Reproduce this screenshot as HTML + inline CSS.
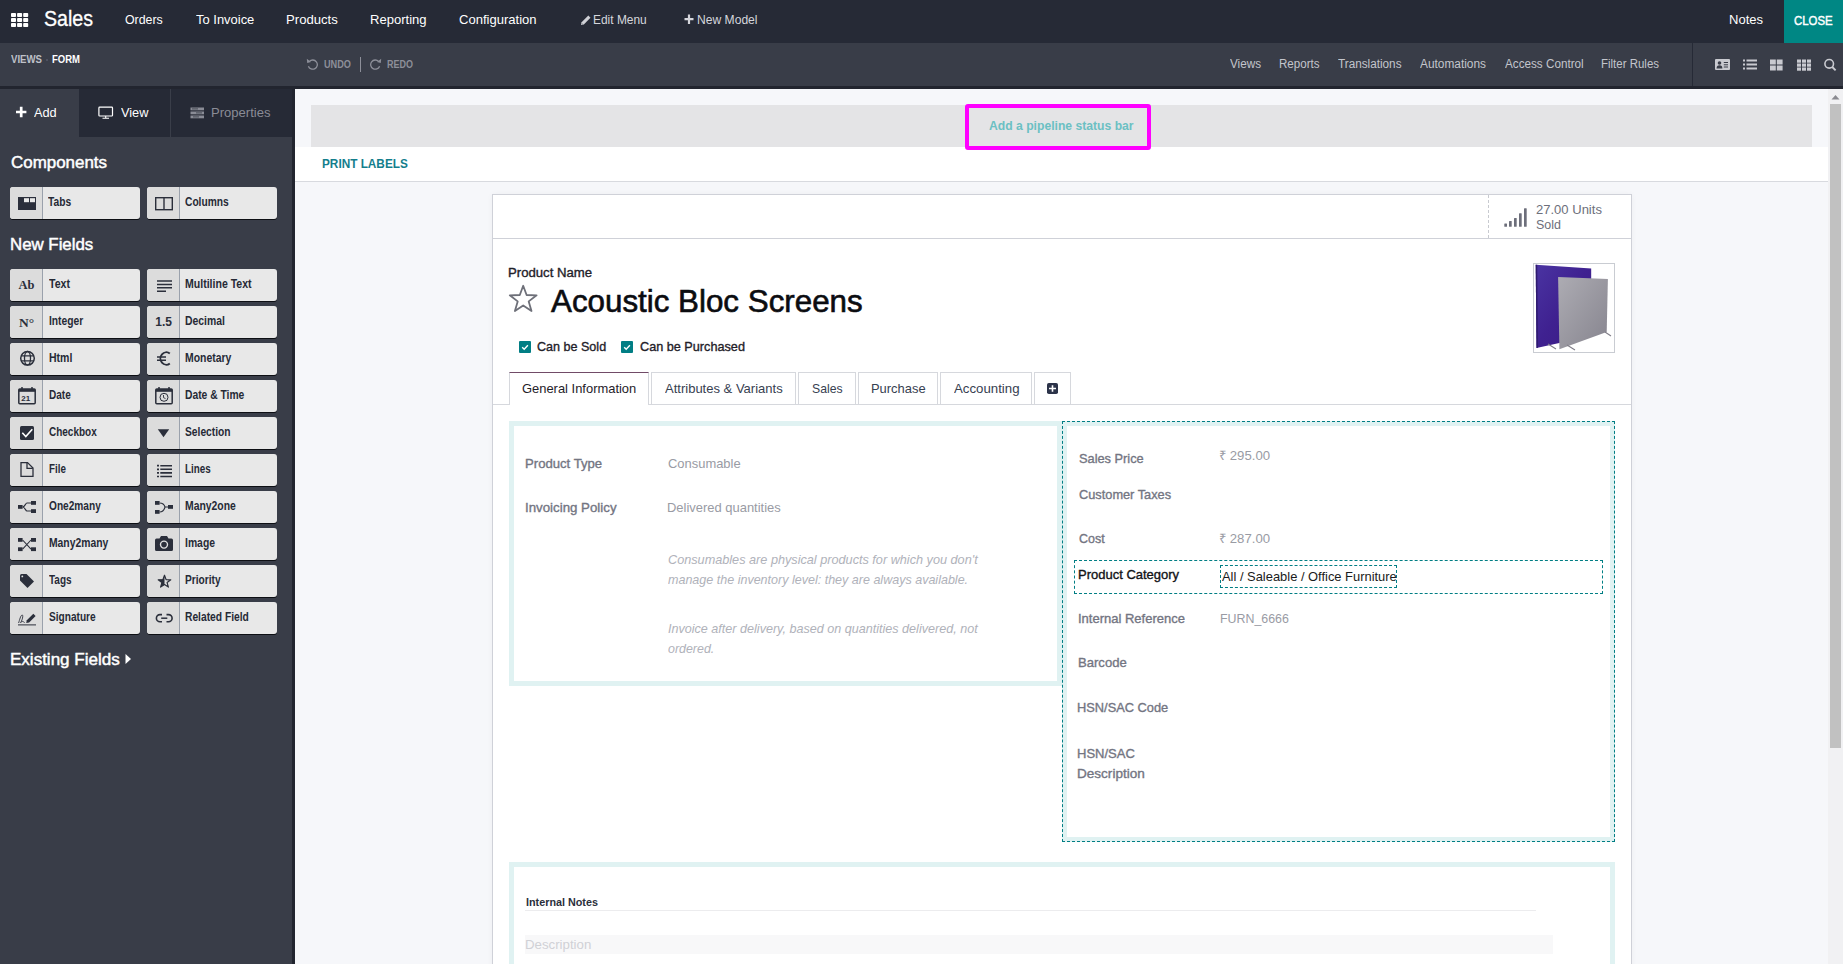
<!DOCTYPE html>
<html><head><meta charset="utf-8"><title>Studio</title><style>*{box-sizing:border-box;margin:0;padding:0}
html,body{width:1843px;height:964px;overflow:hidden;background:#f6f7fa;font-family:"Liberation Sans",sans-serif}
body{position:relative}
.a{position:absolute;white-space:nowrap}
.btn{position:absolute;width:130px;height:32px;background:#e8e8e8;border-radius:3px;box-shadow:0 1px 0 #0d0f14}
.btn .ic{position:absolute;left:0;top:0;width:33px;height:32px;background:#dcdcdc;border-right:1px solid #9aa1ac;border-radius:3px 0 0 3px}
</style></head><body>
<div class="a" style="left:0px;top:0px;width:1843px;height:43px;background:#262a36"></div>
<div class="a" style="left:0px;top:43px;width:1843px;height:43px;background:#393d48"></div>
<div class="a" style="left:0px;top:86px;width:1843px;height:3px;background:#22252f"></div>
<div class="a" style="left:1784px;top:0px;width:59px;height:43px;background:#008784"></div>
<div class="a" style="left:1692px;top:43px;width:1px;height:43px;background:#262a36"></div>
<div class="a" style="left:0px;top:89px;width:292px;height:875px;background:#393d48"></div>
<div class="a" style="left:292px;top:89px;width:3px;height:875px;background:#22252f"></div>
<div class="a" style="left:79px;top:89px;width:213px;height:48px;background:#262a36"></div>
<div class="a" style="left:170px;top:89px;width:1px;height:48px;background:#3a3e49"></div>
<div class="a" style="left:295px;top:89px;width:1533px;height:875px;background:#f6f7fa"></div>
<div class="a" style="left:311px;top:105px;width:1501px;height:42px;background:#e4e4e6"></div>
<div class="a" style="left:295px;top:147px;width:1533px;height:34px;background:#fff"></div>
<div class="a" style="left:295px;top:181px;width:1533px;height:1px;background:#d8dadf"></div>
<div class="a" style="left:1828px;top:89px;width:15px;height:875px;background:#f1f1f3"></div>
<div class="a" style="left:1830px;top:104px;width:11px;height:644px;background:#c1c1c1"></div>
<svg class="a" style="left:1831px;top:94px" width="9" height="6"><path d="M0.5 5.5 L4.5 1 L8.5 5.5Z" fill="#8a8a90"/></svg>
<div class="a" style="left:965px;top:104px;width:186px;height:46px;border:4px solid #ff00ff;border-radius:3px;box-sizing:border-box"></div>
<div class="a" style="left:492px;top:194px;width:1140px;height:800px;background:#fff;border:1px solid #cfd1d8;box-sizing:border-box;box-shadow:0 0 6px rgba(0,0,0,0.04)"></div>
<div class="a" style="left:493px;top:238px;width:1138px;height:1px;background:#cfd1d8"></div>
<div class="a" style="left:1488px;top:195px;width:1px;height:43px;border-left:1px dashed #c8cad0;box-sizing:border-box"></div>
<div class="a" style="left:1533px;top:263px;width:82px;height:90px;border:1px solid #c9ccd2;background:#fff;box-sizing:border-box"></div>
<svg class="a" style="left:1534px;top:264px" width="80" height="88" viewBox="0 0 80 88">
<defs><linearGradient id="gp" x1="0" y1="0" x2="1" y2="1"><stop offset="0" stop-color="#4a34a2"/><stop offset="0.5" stop-color="#3f2190"/><stop offset="1" stop-color="#3a1a84"/></linearGradient>
<linearGradient id="gg" x1="0" y1="0" x2="1" y2="1"><stop offset="0" stop-color="#adacb3"/><stop offset="1" stop-color="#86848e"/></linearGradient></defs>
<path d="M1.7 0.7 L57.2 4.4 L57.2 72 L2.5 84 Z" fill="url(#gp)"/>
<path d="M1.7 0.7 L3.2 0.8 L4 83.7 L2.5 84 Z" fill="#2e1a6e"/>
<path d="M24.1 13.1 L73.9 15.1 L72.7 67.9 L25.4 85.3 Z" fill="url(#gg)"/>
<path d="M14 80 L22 85 M33 81 L41 86 M71 68 L77 72" stroke="#807e88" stroke-width="1.1"/>
</svg>
<div class="a" style="left:493px;top:404px;width:16px;height:1px;background:#d6d8dd"></div>
<div class="a" style="left:509px;top:372px;width:140px;height:33px;border:1px solid #d6d8dd;border-top:1px solid #714b67;border-bottom:none;background:#fff;box-sizing:border-box"></div>
<div class="a" style="left:651px;top:372px;width:145px;height:33px;border:1px solid #d6d8dd;background:#fff;box-sizing:border-box"></div>
<div class="a" style="left:798px;top:372px;width:58px;height:33px;border:1px solid #d6d8dd;background:#fff;box-sizing:border-box"></div>
<div class="a" style="left:858px;top:372px;width:80px;height:33px;border:1px solid #d6d8dd;background:#fff;box-sizing:border-box"></div>
<div class="a" style="left:940px;top:372px;width:92px;height:33px;border:1px solid #d6d8dd;background:#fff;box-sizing:border-box"></div>
<div class="a" style="left:1034px;top:372px;width:37px;height:33px;border:1px solid #d6d8dd;background:#fff;box-sizing:border-box"></div>
<div class="a" style="left:649px;top:404px;width:982px;height:1px;background:#d6d8dd"></div>
<svg class="a" style="left:1047px;top:383px" width="11" height="11" viewBox="0 0 11 11"><rect x="0" y="0" width="11" height="11" rx="1.8" fill="#2c3349"/><path d="M5.5 2.2V8.8M2 5.5H9" stroke="#fff" stroke-width="1.6"/></svg>
<div class="a" style="left:509px;top:421px;width:553px;height:265px;border:5px solid #e0f2f2;box-sizing:border-box"></div>
<div class="a" style="left:1062px;top:421px;width:553px;height:421px;border:5px solid #e0f2f2;box-sizing:border-box"></div>
<div class="a" style="left:1062px;top:421px;width:553px;height:421px;border:1px dashed #017e84;box-sizing:border-box"></div>
<div class="a" style="left:1074px;top:560px;width:529px;height:34px;border:1px dashed #017e84;box-sizing:border-box"></div>
<div class="a" style="left:1220px;top:565px;width:177px;height:23px;border:1px dashed #017e84;box-sizing:border-box"></div>
<div class="a" style="left:509px;top:862px;width:1106px;height:150px;border:5px solid #e0f2f2;box-sizing:border-box"></div>
<div class="a" style="left:525px;top:910px;width:1011px;height:1px;background:#ececee"></div>
<div class="a" style="left:525px;top:935px;width:1028px;height:19px;background:#f8f8f9"></div>
<div class="btn" style="left:10px;top:187px"><div class="ic"></div><svg class="a" style="left:0;top:0" width="32" height="32" viewBox="0 0 32 32"><rect x="8" y="10" width="18" height="13" fill="#2b2f3b"/><rect x="14" y="11.2" width="5" height="4" fill="#e8e8e8"/><rect x="20" y="11.2" width="5" height="4" fill="#e8e8e8"/></svg></div>
<div class="btn" style="left:147px;top:187px"><div class="ic"></div><svg class="a" style="left:0;top:0" width="32" height="32" viewBox="0 0 32 32"><rect x="8.7" y="10.7" width="16.6" height="12" fill="none" stroke="#2b2f3b" stroke-width="1.4"/><path d="M17 10.7V22.7" stroke="#2b2f3b" stroke-width="1.4"/></svg></div>
<div class="btn" style="left:10px;top:269px"><div class="ic"></div><svg class="a" style="left:0;top:0" width="32" height="32" viewBox="0 0 32 32"><text x="8.5" y="20" font-family="Liberation Serif" font-weight="bold" font-size="12.5" fill="#2b2f3b">Ab</text></svg></div>
<div class="btn" style="left:147px;top:269px"><div class="ic"></div><svg class="a" style="left:0;top:0" width="32" height="32" viewBox="0 0 32 32"><path d="M10 12H25M10 15.4H25M10 18.8H25M10 22.2H19" stroke="#2b2f3b" stroke-width="1.5"/></svg></div>
<div class="btn" style="left:10px;top:306px"><div class="ic"></div><svg class="a" style="left:0;top:0" width="32" height="32" viewBox="0 0 32 32"><text x="9" y="21" font-family="Liberation Serif" font-weight="bold" font-size="13.5" fill="#2b2f3b">N°</text></svg></div>
<div class="btn" style="left:147px;top:306px"><div class="ic"></div><svg class="a" style="left:0;top:0" width="32" height="32" viewBox="0 0 32 32"><text x="8.3" y="20" font-family="Liberation Sans" font-weight="bold" font-size="12" fill="#2b2f3b">1.5</text></svg></div>
<div class="btn" style="left:10px;top:343px"><div class="ic"></div><svg class="a" style="left:0;top:0" width="32" height="32" viewBox="0 0 32 32"><circle cx="17.5" cy="15.3" r="6.8" fill="none" stroke="#2b2f3b" stroke-width="1.5"/><ellipse cx="17.5" cy="15.3" rx="3" ry="6.8" fill="none" stroke="#2b2f3b" stroke-width="1.3"/><path d="M11 12.8H24M11 17.8H24" stroke="#2b2f3b" stroke-width="1.3"/></svg></div>
<div class="btn" style="left:147px;top:343px"><div class="ic"></div><svg class="a" style="left:0;top:0" width="32" height="32" viewBox="0 0 32 32"><path d="M22.8 10.6 A5.8 6.2 0 1 0 22.8 20.4" fill="none" stroke="#2b2f3b" stroke-width="1.9"/><path d="M10 14H19M10 17.2H19" stroke="#2b2f3b" stroke-width="1.4"/></svg></div>
<div class="btn" style="left:10px;top:380px"><div class="ic"></div><svg class="a" style="left:0;top:0" width="32" height="32" viewBox="0 0 32 32"><rect x="8.8" y="9" width="16.4" height="14.8" rx="1" fill="none" stroke="#2b2f3b" stroke-width="1.5"/><rect x="8.8" y="9" width="16.4" height="2.8" fill="#2b2f3b"/><path d="M12 7V10M22 7V10" stroke="#2b2f3b" stroke-width="1.5"/><text x="11.2" y="21.4" font-family="Liberation Sans" font-weight="bold" font-size="8" fill="#2b2f3b">21</text></svg></div>
<div class="btn" style="left:147px;top:380px"><div class="ic"></div><svg class="a" style="left:0;top:0" width="32" height="32" viewBox="0 0 32 32"><rect x="8.8" y="9" width="16.4" height="14.8" rx="1" fill="none" stroke="#2b2f3b" stroke-width="1.5"/><rect x="8.8" y="9" width="16.4" height="2.8" fill="#2b2f3b"/><path d="M12 7V10M22 7V10" stroke="#2b2f3b" stroke-width="1.5"/><circle cx="17" cy="17.3" r="4" fill="none" stroke="#2b2f3b" stroke-width="1"/><path d="M16.5 15V17.6L18.5 18.6" fill="none" stroke="#2b2f3b" stroke-width="0.9"/></svg></div>
<div class="btn" style="left:10px;top:417px"><div class="ic"></div><svg class="a" style="left:0;top:0" width="32" height="32" viewBox="0 0 32 32"><rect x="10" y="9" width="14" height="14" rx="1.5" fill="#2b2f3b"/><path d="M12.3 15.8L15.8 19.5L22.3 12.2" fill="none" stroke="#fff" stroke-width="1.6"/></svg></div>
<div class="btn" style="left:147px;top:417px"><div class="ic"></div><svg class="a" style="left:0;top:0" width="32" height="32" viewBox="0 0 32 32"><path d="M10.8 12.2H22.2L16.5 20.3Z" fill="#2b2f3b"/></svg></div>
<div class="btn" style="left:10px;top:454px"><div class="ic"></div><svg class="a" style="left:0;top:0" width="32" height="32" viewBox="0 0 32 32"><path d="M11 8.6H17.5L23 14V22.3H11Z" fill="none" stroke="#2b2f3b" stroke-width="1.3"/><path d="M17 8.8V14.3H22.8" fill="none" stroke="#2b2f3b" stroke-width="1.3"/></svg></div>
<div class="btn" style="left:147px;top:454px"><div class="ic"></div><svg class="a" style="left:0;top:0" width="32" height="32" viewBox="0 0 32 32"><path d="M10 11.7H12M10 15.3H12M10 18.9H12M10 22.5H12" stroke="#2b2f3b" stroke-width="1.7"/><path d="M13.3 11.7H25M13.3 15.3H25M13.3 18.9H25M13.3 22.5H25" stroke="#2b2f3b" stroke-width="1.6"/></svg></div>
<div class="btn" style="left:10px;top:491px"><div class="ic"></div><svg class="a" style="left:0;top:0" width="32" height="32" viewBox="0 0 32 32"><rect x="8" y="14" width="4.6" height="3.8" fill="#2b2f3b"/><rect x="21" y="10" width="5" height="3.8" fill="#2b2f3b"/><rect x="21" y="18.2" width="5" height="3.8" fill="#2b2f3b"/><path d="M12.6 16C15 16 15.5 12 17 12H21M12.6 16C15 16 15.5 20 17 20H21" fill="none" stroke="#2b2f3b" stroke-width="1.1"/></svg></div>
<div class="btn" style="left:147px;top:491px"><div class="ic"></div><svg class="a" style="left:0;top:0" width="32" height="32" viewBox="0 0 32 32"><rect x="8" y="10" width="4.6" height="3.8" fill="#2b2f3b"/><rect x="8" y="19" width="4.6" height="3.8" fill="#2b2f3b"/><rect x="21" y="14" width="5" height="3.8" fill="#2b2f3b"/><path d="M12.6 12C15 12 17 12.5 18 16H21M12.6 21C15 21 17 20 18 16" fill="none" stroke="#2b2f3b" stroke-width="1.1"/></svg></div>
<div class="btn" style="left:10px;top:528px"><div class="ic"></div><svg class="a" style="left:0;top:0" width="32" height="32" viewBox="0 0 32 32"><rect x="8" y="10" width="4.6" height="3.8" fill="#2b2f3b"/><rect x="8" y="19.3" width="4.6" height="3.8" fill="#2b2f3b"/><rect x="21" y="10" width="5" height="3.8" fill="#2b2f3b"/><rect x="21" y="19.3" width="5" height="3.8" fill="#2b2f3b"/><path d="M12.6 12L21 21.2M12.6 21.2L21 12" fill="none" stroke="#2b2f3b" stroke-width="1.1"/></svg></div>
<div class="btn" style="left:147px;top:528px"><div class="ic"></div><svg class="a" style="left:0;top:0" width="32" height="32" viewBox="0 0 32 32"><path d="M8 12.2Q8 10.6 9.5 10.6H12.5L14 8H20L21.5 10.6H24.5Q26 10.6 26 12.2V21.5Q26 23 24.5 23H9.5Q8 23 8 21.5Z" fill="#2b2f3b"/><circle cx="17" cy="16.6" r="3.5" fill="none" stroke="#e0e0e0" stroke-width="1.4"/></svg></div>
<div class="btn" style="left:10px;top:565px"><div class="ic"></div><svg class="a" style="left:0;top:0" width="32" height="32" viewBox="0 0 32 32"><path d="M10 10.5Q10 9 11.5 9H16.5L24 16.5L17.5 23L10 15.5Z" fill="#2b2f3b"/><circle cx="12.3" cy="11.4" r="0.9" fill="#e0e0e0"/></svg></div>
<div class="btn" style="left:147px;top:565px"><div class="ic"></div><svg class="a" style="left:0;top:0" width="32" height="32" viewBox="0 0 32 32"><path d="M17.5 10.2L19.1 14.6L23.8 14.8L20.1 17.6L21.4 22.1L17.5 19.5L13.6 22.1L14.9 17.6L11.2 14.8L15.9 14.6Z" fill="none" stroke="#2b2f3b" stroke-width="1.2" stroke-linejoin="round"/><path d="M17.5 10.2L15.9 14.6L11.2 14.8L14.9 17.6L13.6 22.1L17.5 19.5Z" fill="#2b2f3b"/></svg></div>
<div class="btn" style="left:10px;top:602px"><div class="ic"></div><svg class="a" style="left:0;top:0" width="32" height="32" viewBox="0 0 32 32"><path d="M8.6 21C9.6 18 10.6 13.2 12.2 13C13.6 13 12.2 18.5 10.6 20.6C12.2 18.6 13.8 19.6 14.6 20.8" fill="none" stroke="#2b2f3b" stroke-width="0.9"/><path d="M16.2 21L16.8 18.2L23.3 11.7L25.6 14L19.1 20.5Z" fill="#2b2f3b"/><path d="M8 22.9H26" stroke="#2b2f3b" stroke-width="1"/></svg></div>
<div class="btn" style="left:147px;top:602px"><div class="ic"></div><svg class="a" style="left:0;top:0" width="32" height="32" viewBox="0 0 32 32"><path d="M15 12.6H13A3.6 3.6 0 0 0 13 19.8H15M19.5 12.6H21.5A3.6 3.6 0 0 1 21.5 19.8H19.5" fill="none" stroke="#2b2f3b" stroke-width="1.6"/><path d="M14.2 16.2H20.3" stroke="#2b2f3b" stroke-width="1.5"/></svg></div>
<svg class="a" style="left:0;top:0" width="40" height="40"><rect x="11.0" y="13" width="5" height="4" rx="0.8" fill="#fff"/><rect x="17.1" y="13" width="5" height="4" rx="0.8" fill="#fff"/><rect x="23.2" y="13" width="5" height="4" rx="0.8" fill="#fff"/><rect x="11.0" y="18" width="5" height="4" rx="0.8" fill="#fff"/><rect x="17.1" y="18" width="5" height="4" rx="0.8" fill="#fff"/><rect x="23.2" y="18" width="5" height="4" rx="0.8" fill="#fff"/><rect x="11.0" y="23" width="5" height="4" rx="0.8" fill="#fff"/><rect x="17.1" y="23" width="5" height="4" rx="0.8" fill="#fff"/><rect x="23.2" y="23" width="5" height="4" rx="0.8" fill="#fff"/></svg>
<svg class="a" style="left:580px;top:14px" width="12" height="12" viewBox="0 0 12 12"><path d="M1 11L1.6 8.2L8.3 1.5L10.5 3.7L3.8 10.4Z" fill="#cfd0d6"/><path d="M2 9.5L2.6 10" stroke="#262a36" stroke-width="0.6"/></svg>
<svg class="a" style="left:684px;top:14px" width="11" height="11" viewBox="0 0 11 11"><path d="M5 0.5V10M0.5 5.2H9.5" stroke="#d5d6dc" stroke-width="2.2"/></svg>
<svg class="a" style="left:306px;top:58px" width="13" height="12" viewBox="0 0 13 12"><path d="M3.4 3.4A4.6 4.6 0 1 1 2.4 8.2" fill="none" stroke="#8d8f99" stroke-width="1.3"/><path d="M0.8 0.8L1.2 4.9L5 4.1Z" fill="#8d8f99"/></svg>
<svg class="a" style="left:360px;top:57px" width="1" height="15"><rect width="1" height="15" fill="#8d8f99"/></svg>
<svg class="a" style="left:369px;top:58px" width="13" height="12" viewBox="0 0 13 12"><path d="M9.6 3.4A4.6 4.6 0 1 0 10.6 8.2" fill="none" stroke="#8d8f99" stroke-width="1.3"/><path d="M12.2 0.8L11.8 4.9L8 4.1Z" fill="#8d8f99"/></svg>
<svg class="a" style="left:1714px;top:58px" width="124" height="14" viewBox="0 0 124 14">
<rect x="1" y="1" width="15" height="11" rx="1" fill="#c9cad0"/><circle cx="5.5" cy="5" r="1.8" fill="#393d48"/><path d="M2.6 10.5Q2.6 7.3 5.5 7.3Q8.4 7.3 8.4 10.5Z" fill="#393d48"/><path d="M9.8 4.5H14M9.8 6.8H14M9.8 9H14" stroke="#393d48" stroke-width="1"/>
<path d="M29 2.5H31M29 6.5H31M29 10.5H31" stroke="#c9cad0" stroke-width="1.8"/><path d="M32.5 2.5H43M32.5 6.5H43M32.5 10.5H43" stroke="#c9cad0" stroke-width="1.8"/>
<rect x="56" y="1.5" width="5.8" height="5" fill="#c9cad0"/><rect x="62.8" y="1.5" width="5.8" height="5" fill="#c9cad0"/><rect x="56" y="7.5" width="5.8" height="5" fill="#c9cad0"/><rect x="62.8" y="7.5" width="5.8" height="5" fill="#c9cad0"/>
<g fill="#c9cad0"><rect x="83" y="1.5" width="4" height="3.2"/><rect x="88" y="1.5" width="4" height="3.2"/><rect x="93" y="1.5" width="4" height="3.2"/><rect x="83" y="5.5" width="4" height="3.2"/><rect x="88" y="5.5" width="4" height="3.2"/><rect x="93" y="5.5" width="4" height="3.2"/><rect x="83" y="9.5" width="4" height="3.2"/><rect x="88" y="9.5" width="4" height="3.2"/><rect x="93" y="9.5" width="4" height="3.2"/></g>
<circle cx="115.2" cy="5.8" r="4.3" fill="none" stroke="#c9cad0" stroke-width="1.6"/><path d="M118.3 9L121.6 12.4" stroke="#c9cad0" stroke-width="1.9"/>
</svg>
<svg class="a" style="left:15px;top:106px" width="13" height="12" viewBox="0 0 13 12"><path d="M6.2 0.8V11.2M1 6H11.4" stroke="#fff" stroke-width="2.7"/></svg>
<svg class="a" style="left:98px;top:106px" width="16" height="13" viewBox="0 0 16 13"><rect x="0.9" y="1.2" width="13.6" height="8.8" rx="0.8" fill="none" stroke="#fff" stroke-width="1.2"/><path d="M4.5 12.2H11M7.7 10V12" stroke="#fff" stroke-width="1.1"/></svg>
<svg class="a" style="left:190px;top:107px" width="15" height="12" viewBox="0 0 15 12"><g fill="#8a8c96"><rect x="0.5" y="0.5" width="13.5" height="2.8"/><rect x="0.5" y="4.5" width="13.5" height="2.8"/><rect x="0.5" y="8.5" width="13.5" height="2.8"/></g><path d="M2 1.9H8M6 5.9H12M3 9.9H9" stroke="#393d48" stroke-width="0.8"/></svg>
<svg class="a" style="left:125px;top:653px" width="7" height="12" viewBox="0 0 7 12"><path d="M0.5 1L6 6L0.5 11Z" fill="#fff"/></svg>
<svg class="a" style="left:508px;top:284px" width="31" height="30" viewBox="0 0 31 30"><path d="M15.2 1.8L18.6 11L28.6 11.3L20.7 17.4L23.5 27L15.2 21.4L6.9 27L9.7 17.4L1.8 11.3L11.8 11Z" fill="none" stroke="#6e7079" stroke-width="1.8" stroke-linejoin="round"/></svg>
<svg class="a" style="left:519px;top:341px" width="12" height="12" viewBox="0 0 12 12"><rect width="12" height="12" rx="1" fill="#017e84"/><path d="M3.2 6.2L5.2 8.2L8.9 4.2" fill="none" stroke="#fff" stroke-width="1.4"/></svg>
<svg class="a" style="left:621px;top:341px" width="12" height="12" viewBox="0 0 12 12"><rect width="12" height="12" rx="1" fill="#017e84"/><path d="M3.2 6.2L5.2 8.2L8.9 4.2" fill="none" stroke="#fff" stroke-width="1.4"/></svg>
<svg class="a" style="left:1504px;top:207px" width="24" height="21" viewBox="0 0 24 21"><g fill="#6d6f7b"><rect x="0.3" y="16.5" width="2.7" height="3.3" rx="0.5"/><rect x="5" y="14" width="2.7" height="5.8" rx="0.5"/><rect x="10" y="11" width="2.7" height="8.8" rx="0.5"/><rect x="15" y="6.2" width="2.7" height="13.6" rx="0.5"/><rect x="20" y="1.3" width="2.7" height="18.5" rx="0.5"/></g></svg>
<div class="a" style="left:46px;top:59px;width:2px;height:2px;background:#4d5160"></div>
<div class="a t" style="left:44.30px;top:8.80px;font-size:21.5px;line-height:21.5px;font-weight:normal;font-style:normal;color:#ffffff;transform:scaleX(0.9127);transform-origin:0 0;font-family:'Liberation Sans',sans-serif;-webkit-text-stroke:0.3px #fff;">Sales</div>
<div class="a t" style="left:125.30px;top:13.00px;font-size:13px;line-height:13px;font-weight:normal;font-style:normal;color:#ffffff;transform:scaleX(0.9495);transform-origin:0 0;font-family:'Liberation Sans',sans-serif;">Orders</div>
<div class="a t" style="left:196.30px;top:13.00px;font-size:13px;line-height:13px;font-weight:normal;font-style:normal;color:#ffffff;transform:scaleX(0.9965);transform-origin:0 0;font-family:'Liberation Sans',sans-serif;">To Invoice</div>
<div class="a t" style="left:285.99px;top:13.00px;font-size:13px;line-height:13px;font-weight:normal;font-style:normal;color:#ffffff;transform:scaleX(1.0098);transform-origin:0 0;font-family:'Liberation Sans',sans-serif;">Products</div>
<div class="a t" style="left:370.00px;top:13.00px;font-size:13px;line-height:13px;font-weight:normal;font-style:normal;color:#ffffff;transform:scaleX(1.0030);transform-origin:0 0;font-family:'Liberation Sans',sans-serif;">Reporting</div>
<div class="a t" style="left:459.20px;top:13.00px;font-size:13px;line-height:13px;font-weight:normal;font-style:normal;color:#ffffff;transform:scaleX(1.0039);transform-origin:0 0;font-family:'Liberation Sans',sans-serif;">Configuration</div>
<div class="a t" style="left:592.98px;top:13.00px;font-size:13px;line-height:13px;font-weight:normal;font-style:normal;color:#d5d6dc;transform:scaleX(0.9179);transform-origin:0 0;font-family:'Liberation Sans',sans-serif;">Edit Menu</div>
<div class="a t" style="left:696.57px;top:13.00px;font-size:13px;line-height:13px;font-weight:normal;font-style:normal;color:#d5d6dc;transform:scaleX(0.9308);transform-origin:0 0;font-family:'Liberation Sans',sans-serif;">New Model</div>
<div class="a t" style="left:1728.50px;top:13.00px;font-size:13px;line-height:13px;font-weight:normal;font-style:normal;color:#ffffff;transform:scaleX(1.0012);transform-origin:0 0;font-family:'Liberation Sans',sans-serif;">Notes</div>
<div class="a t" style="left:1794.00px;top:14.00px;font-size:13px;line-height:13px;font-weight:normal;font-style:normal;color:#ffffff;transform:scaleX(0.8784);transform-origin:0 0;font-family:'Liberation Sans',sans-serif;-webkit-text-stroke:0.45px #fff;">CLOSE</div>
<div class="a t" style="left:11.00px;top:54.11px;font-size:10.5px;line-height:10.5px;font-weight:bold;font-style:normal;color:#bfc1c8;transform:scaleX(0.9162);transform-origin:0 0;font-family:'Liberation Sans',sans-serif;">VIEWS</div>
<div class="a t" style="left:51.80px;top:54.11px;font-size:10.5px;line-height:10.5px;font-weight:bold;font-style:normal;color:#ffffff;transform:scaleX(0.9049);transform-origin:0 0;font-family:'Liberation Sans',sans-serif;">FORM</div>
<div class="a t" style="left:323.90px;top:59.11px;font-size:10.5px;line-height:10.5px;font-weight:bold;font-style:normal;color:#8d8f99;transform:scaleX(0.8716);transform-origin:0 0;font-family:'Liberation Sans',sans-serif;">UNDO</div>
<div class="a t" style="left:387.00px;top:59.11px;font-size:10.5px;line-height:10.5px;font-weight:bold;font-style:normal;color:#8d8f99;transform:scaleX(0.8552);transform-origin:0 0;font-family:'Liberation Sans',sans-serif;">REDO</div>
<div class="a t" style="left:1229.50px;top:58.34px;font-size:12px;line-height:12px;font-weight:normal;font-style:normal;color:#c3c5cc;transform:scaleX(0.9751);transform-origin:0 0;font-family:'Liberation Sans',sans-serif;">Views</div>
<div class="a t" style="left:1279.00px;top:58.34px;font-size:12px;line-height:12px;font-weight:normal;font-style:normal;color:#c3c5cc;transform:scaleX(0.9639);transform-origin:0 0;font-family:'Liberation Sans',sans-serif;">Reports</div>
<div class="a t" style="left:1338.00px;top:58.34px;font-size:12px;line-height:12px;font-weight:normal;font-style:normal;color:#c3c5cc;transform:scaleX(0.9782);transform-origin:0 0;font-family:'Liberation Sans',sans-serif;">Translations</div>
<div class="a t" style="left:1420.00px;top:58.34px;font-size:12px;line-height:12px;font-weight:normal;font-style:normal;color:#c3c5cc;transform:scaleX(0.9895);transform-origin:0 0;font-family:'Liberation Sans',sans-serif;">Automations</div>
<div class="a t" style="left:1505.00px;top:58.34px;font-size:12px;line-height:12px;font-weight:normal;font-style:normal;color:#c3c5cc;transform:scaleX(0.9746);transform-origin:0 0;font-family:'Liberation Sans',sans-serif;">Access Control</div>
<div class="a t" style="left:1601.00px;top:58.34px;font-size:12px;line-height:12px;font-weight:normal;font-style:normal;color:#c3c5cc;transform:scaleX(0.9558);transform-origin:0 0;font-family:'Liberation Sans',sans-serif;">Filter Rules</div>
<div class="a t" style="left:33.70px;top:106.00px;font-size:13px;line-height:13px;font-weight:normal;font-style:normal;color:#ffffff;transform:scaleX(0.9825);transform-origin:0 0;font-family:'Liberation Sans',sans-serif;">Add</div>
<div class="a t" style="left:120.50px;top:106.00px;font-size:13px;line-height:13px;font-weight:normal;font-style:normal;color:#ffffff;transform:scaleX(0.9806);transform-origin:0 0;font-family:'Liberation Sans',sans-serif;">View</div>
<div class="a t" style="left:210.60px;top:106.00px;font-size:13px;line-height:13px;font-weight:normal;font-style:normal;color:#8a8c96;transform:scaleX(1.0043);transform-origin:0 0;font-family:'Liberation Sans',sans-serif;">Properties</div>
<div class="a t" style="left:10.60px;top:155.46px;font-size:16px;line-height:16px;font-weight:normal;font-style:normal;color:#ffffff;transform:scaleX(1.0582);transform-origin:0 0;font-family:'Liberation Sans',sans-serif;-webkit-text-stroke:0.45px #fff;">Components</div>
<div class="a t" style="left:9.55px;top:237.46px;font-size:16px;line-height:16px;font-weight:normal;font-style:normal;color:#ffffff;transform:scaleX(1.0521);transform-origin:0 0;font-family:'Liberation Sans',sans-serif;-webkit-text-stroke:0.45px #fff;">New Fields</div>
<div class="a t" style="left:9.54px;top:652.46px;font-size:16px;line-height:16px;font-weight:normal;font-style:normal;color:#ffffff;transform:scaleX(1.0632);transform-origin:0 0;font-family:'Liberation Sans',sans-serif;-webkit-text-stroke:0.45px #fff;">Existing Fields</div>
<div class="a t" style="left:48.30px;top:196.34px;font-size:12px;line-height:12px;font-weight:bold;font-style:normal;color:#262a36;transform:scaleX(0.8527);transform-origin:0 0;font-family:'Liberation Sans',sans-serif;">Tabs</div>
<div class="a t" style="left:184.80px;top:196.34px;font-size:12px;line-height:12px;font-weight:bold;font-style:normal;color:#262a36;transform:scaleX(0.8517);transform-origin:0 0;font-family:'Liberation Sans',sans-serif;">Columns</div>
<div class="a t" style="left:48.50px;top:278.34px;font-size:12px;line-height:12px;font-weight:bold;font-style:normal;color:#262a36;transform:scaleX(0.8828);transform-origin:0 0;font-family:'Liberation Sans',sans-serif;">Text</div>
<div class="a t" style="left:185.40px;top:278.34px;font-size:12px;line-height:12px;font-weight:bold;font-style:normal;color:#262a36;transform:scaleX(0.8788);transform-origin:0 0;font-family:'Liberation Sans',sans-serif;">Multiline Text</div>
<div class="a t" style="left:48.50px;top:315.34px;font-size:12px;line-height:12px;font-weight:bold;font-style:normal;color:#262a36;transform:scaleX(0.8553);transform-origin:0 0;font-family:'Liberation Sans',sans-serif;">Integer</div>
<div class="a t" style="left:185.40px;top:315.34px;font-size:12px;line-height:12px;font-weight:bold;font-style:normal;color:#262a36;transform:scaleX(0.8667);transform-origin:0 0;font-family:'Liberation Sans',sans-serif;">Decimal</div>
<div class="a t" style="left:48.50px;top:352.34px;font-size:12px;line-height:12px;font-weight:bold;font-style:normal;color:#262a36;transform:scaleX(0.8773);transform-origin:0 0;font-family:'Liberation Sans',sans-serif;">Html</div>
<div class="a t" style="left:185.40px;top:352.34px;font-size:12px;line-height:12px;font-weight:bold;font-style:normal;color:#262a36;transform:scaleX(0.8683);transform-origin:0 0;font-family:'Liberation Sans',sans-serif;">Monetary</div>
<div class="a t" style="left:48.50px;top:389.34px;font-size:12px;line-height:12px;font-weight:bold;font-style:normal;color:#262a36;transform:scaleX(0.8354);transform-origin:0 0;font-family:'Liberation Sans',sans-serif;">Date</div>
<div class="a t" style="left:185.40px;top:389.34px;font-size:12px;line-height:12px;font-weight:bold;font-style:normal;color:#262a36;transform:scaleX(0.8580);transform-origin:0 0;font-family:'Liberation Sans',sans-serif;">Date &amp; Time</div>
<div class="a t" style="left:48.50px;top:426.34px;font-size:12px;line-height:12px;font-weight:bold;font-style:normal;color:#262a36;transform:scaleX(0.8322);transform-origin:0 0;font-family:'Liberation Sans',sans-serif;">Checkbox</div>
<div class="a t" style="left:185.40px;top:426.34px;font-size:12px;line-height:12px;font-weight:bold;font-style:normal;color:#262a36;transform:scaleX(0.8544);transform-origin:0 0;font-family:'Liberation Sans',sans-serif;">Selection</div>
<div class="a t" style="left:48.50px;top:463.34px;font-size:12px;line-height:12px;font-weight:bold;font-style:normal;color:#262a36;transform:scaleX(0.8144);transform-origin:0 0;font-family:'Liberation Sans',sans-serif;">File</div>
<div class="a t" style="left:185.40px;top:463.34px;font-size:12px;line-height:12px;font-weight:bold;font-style:normal;color:#262a36;transform:scaleX(0.8179);transform-origin:0 0;font-family:'Liberation Sans',sans-serif;">Lines</div>
<div class="a t" style="left:48.50px;top:500.34px;font-size:12px;line-height:12px;font-weight:bold;font-style:normal;color:#262a36;transform:scaleX(0.8446);transform-origin:0 0;font-family:'Liberation Sans',sans-serif;">One2many</div>
<div class="a t" style="left:185.40px;top:500.34px;font-size:12px;line-height:12px;font-weight:bold;font-style:normal;color:#262a36;transform:scaleX(0.8660);transform-origin:0 0;font-family:'Liberation Sans',sans-serif;">Many2one</div>
<div class="a t" style="left:48.50px;top:537.34px;font-size:12px;line-height:12px;font-weight:bold;font-style:normal;color:#262a36;transform:scaleX(0.8621);transform-origin:0 0;font-family:'Liberation Sans',sans-serif;">Many2many</div>
<div class="a t" style="left:185.40px;top:537.34px;font-size:12px;line-height:12px;font-weight:bold;font-style:normal;color:#262a36;transform:scaleX(0.8655);transform-origin:0 0;font-family:'Liberation Sans',sans-serif;">Image</div>
<div class="a t" style="left:48.50px;top:574.34px;font-size:12px;line-height:12px;font-weight:bold;font-style:normal;color:#262a36;transform:scaleX(0.8308);transform-origin:0 0;font-family:'Liberation Sans',sans-serif;">Tags</div>
<div class="a t" style="left:185.40px;top:574.34px;font-size:12px;line-height:12px;font-weight:bold;font-style:normal;color:#262a36;transform:scaleX(0.8456);transform-origin:0 0;font-family:'Liberation Sans',sans-serif;">Priority</div>
<div class="a t" style="left:48.50px;top:611.34px;font-size:12px;line-height:12px;font-weight:bold;font-style:normal;color:#262a36;transform:scaleX(0.8425);transform-origin:0 0;font-family:'Liberation Sans',sans-serif;">Signature</div>
<div class="a t" style="left:185.40px;top:611.34px;font-size:12px;line-height:12px;font-weight:bold;font-style:normal;color:#262a36;transform:scaleX(0.8554);transform-origin:0 0;font-family:'Liberation Sans',sans-serif;">Related Field</div>
<div class="a t" style="left:321.50px;top:158.42px;font-size:12.5px;line-height:12.5px;font-weight:bold;font-style:normal;color:#137e8c;transform:scaleX(0.9433);transform-origin:0 0;font-family:'Liberation Sans',sans-serif;">PRINT LABELS</div>
<div class="a t" style="left:989.20px;top:119.92px;font-size:12.5px;line-height:12.5px;font-weight:bold;font-style:normal;color:#6bc0c3;transform:scaleX(0.9726);transform-origin:0 0;font-family:'Liberation Sans',sans-serif;">Add a pipeline status bar</div>
<div class="a t" style="left:1536.00px;top:202.50px;font-size:13px;line-height:13px;font-weight:normal;font-style:normal;color:#6d6f7b;transform:scaleX(1.0021);transform-origin:0 0;font-family:'Liberation Sans',sans-serif;">27.00 Units</div>
<div class="a t" style="left:1536.00px;top:217.50px;font-size:13px;line-height:13px;font-weight:normal;font-style:normal;color:#6d6f7b;transform:scaleX(0.9578);transform-origin:0 0;font-family:'Liberation Sans',sans-serif;">Sold</div>
<div class="a t" style="left:507.65px;top:266.92px;font-size:12.5px;line-height:12.5px;font-weight:normal;font-style:normal;color:#1f2129;transform:scaleX(1.0527);transform-origin:0 0;font-family:'Liberation Sans',sans-serif;-webkit-text-stroke:0.35px #1f2129;">Product Name</div>
<div class="a t" style="left:550.50px;top:286.18px;font-size:30.5px;line-height:30.5px;font-weight:normal;font-style:normal;color:#0b0c10;transform:scaleX(1.0271);transform-origin:0 0;font-family:'Liberation Sans',sans-serif;-webkit-text-stroke:0.6px #0b0c10;">Acoustic Bloc Screens</div>
<div class="a t" style="left:536.70px;top:340.00px;font-size:13px;line-height:13px;font-weight:normal;font-style:normal;color:#1f2129;transform:scaleX(0.9661);transform-origin:0 0;font-family:'Liberation Sans',sans-serif;-webkit-text-stroke:0.35px #1f2129;">Can be Sold</div>
<div class="a t" style="left:639.60px;top:340.00px;font-size:13px;line-height:13px;font-weight:normal;font-style:normal;color:#1f2129;transform:scaleX(0.9744);transform-origin:0 0;font-family:'Liberation Sans',sans-serif;-webkit-text-stroke:0.35px #1f2129;">Can be Purchased</div>
<div class="a t" style="left:522.00px;top:381.80px;font-size:13px;line-height:13px;font-weight:normal;font-style:normal;color:#1f2129;transform:scaleX(0.9942);transform-origin:0 0;font-family:'Liberation Sans',sans-serif;">General Information</div>
<div class="a t" style="left:665.00px;top:381.80px;font-size:13px;line-height:13px;font-weight:normal;font-style:normal;color:#374151;transform:scaleX(1.0014);transform-origin:0 0;font-family:'Liberation Sans',sans-serif;">Attributes &amp; Variants</div>
<div class="a t" style="left:811.50px;top:381.80px;font-size:13px;line-height:13px;font-weight:normal;font-style:normal;color:#374151;transform:scaleX(0.9389);transform-origin:0 0;font-family:'Liberation Sans',sans-serif;">Sales</div>
<div class="a t" style="left:870.61px;top:381.80px;font-size:13px;line-height:13px;font-weight:normal;font-style:normal;color:#374151;transform:scaleX(0.9946);transform-origin:0 0;font-family:'Liberation Sans',sans-serif;">Purchase</div>
<div class="a t" style="left:953.50px;top:381.80px;font-size:13px;line-height:13px;font-weight:normal;font-style:normal;color:#374151;transform:scaleX(1.0189);transform-origin:0 0;font-family:'Liberation Sans',sans-serif;">Accounting</div>
<div class="a t" style="left:524.59px;top:457.00px;font-size:13px;line-height:13px;font-weight:normal;font-style:normal;color:#737582;transform:scaleX(1.0097);transform-origin:0 0;font-family:'Liberation Sans',sans-serif;-webkit-text-stroke:0.35px #737582;">Product Type</div>
<div class="a t" style="left:667.80px;top:457.00px;font-size:13px;line-height:13px;font-weight:normal;font-style:normal;color:#999ba4;transform:scaleX(0.9951);transform-origin:0 0;font-family:'Liberation Sans',sans-serif;">Consumable</div>
<div class="a t" style="left:524.58px;top:501.00px;font-size:13px;line-height:13px;font-weight:normal;font-style:normal;color:#737582;transform:scaleX(1.0214);transform-origin:0 0;font-family:'Liberation Sans',sans-serif;-webkit-text-stroke:0.35px #737582;">Invoicing Policy</div>
<div class="a t" style="left:666.80px;top:501.00px;font-size:13px;line-height:13px;font-weight:normal;font-style:normal;color:#999ba4;transform:scaleX(0.9958);transform-origin:0 0;font-family:'Liberation Sans',sans-serif;">Delivered quantities</div>
<div class="a t" style="left:667.80px;top:553.00px;font-size:13px;line-height:13px;font-weight:normal;font-style:italic;color:#b0b2ba;transform:scaleX(0.9752);transform-origin:0 0;font-family:'Liberation Sans',sans-serif;">Consumables are physical products for which you don't</div>
<div class="a t" style="left:667.80px;top:573.00px;font-size:13px;line-height:13px;font-weight:normal;font-style:italic;color:#b0b2ba;transform:scaleX(0.9635);transform-origin:0 0;font-family:'Liberation Sans',sans-serif;">manage the inventory level: they are always available.</div>
<div class="a t" style="left:667.80px;top:621.50px;font-size:13px;line-height:13px;font-weight:normal;font-style:italic;color:#b0b2ba;transform:scaleX(0.9680);transform-origin:0 0;font-family:'Liberation Sans',sans-serif;">Invoice after delivery, based on quantities delivered, not</div>
<div class="a t" style="left:667.80px;top:641.50px;font-size:13px;line-height:13px;font-weight:normal;font-style:italic;color:#b0b2ba;transform:scaleX(0.9559);transform-origin:0 0;font-family:'Liberation Sans',sans-serif;">ordered.</div>
<div class="a t" style="left:1079.00px;top:452.00px;font-size:13px;line-height:13px;font-weight:normal;font-style:normal;color:#737582;transform:scaleX(0.9844);transform-origin:0 0;font-family:'Liberation Sans',sans-serif;-webkit-text-stroke:0.35px #737582;">Sales Price</div>
<div class="a t" style="left:1219.49px;top:448.50px;font-size:13px;line-height:13px;font-weight:normal;font-style:normal;color:#999ba4;transform:scaleX(1.0134);transform-origin:0 0;font-family:'Liberation Sans',sans-serif;">₹ 295.00</div>
<div class="a t" style="left:1079.00px;top:487.50px;font-size:13px;line-height:13px;font-weight:normal;font-style:normal;color:#737582;transform:scaleX(0.9828);transform-origin:0 0;font-family:'Liberation Sans',sans-serif;-webkit-text-stroke:0.35px #737582;">Customer Taxes</div>
<div class="a t" style="left:1079.00px;top:531.50px;font-size:13px;line-height:13px;font-weight:normal;font-style:normal;color:#737582;transform:scaleX(0.9588);transform-origin:0 0;font-family:'Liberation Sans',sans-serif;-webkit-text-stroke:0.35px #737582;">Cost</div>
<div class="a t" style="left:1219.49px;top:531.50px;font-size:13px;line-height:13px;font-weight:normal;font-style:normal;color:#999ba4;transform:scaleX(1.0134);transform-origin:0 0;font-family:'Liberation Sans',sans-serif;">₹ 287.00</div>
<div class="a t" style="left:1078.00px;top:567.50px;font-size:13px;line-height:13px;font-weight:normal;font-style:normal;color:#111216;transform:scaleX(0.9994);transform-origin:0 0;font-family:'Liberation Sans',sans-serif;-webkit-text-stroke:0.35px #111216;">Product Category</div>
<div class="a t" style="left:1221.50px;top:569.50px;font-size:13px;line-height:13px;font-weight:normal;font-style:normal;color:#1a1b20;transform:scaleX(0.9924);transform-origin:0 0;font-family:'Liberation Sans',sans-serif;">All / Saleable / Office Furniture</div>
<div class="a t" style="left:1078.00px;top:611.60px;font-size:13px;line-height:13px;font-weight:normal;font-style:normal;color:#737582;transform:scaleX(0.9998);transform-origin:0 0;font-family:'Liberation Sans',sans-serif;-webkit-text-stroke:0.35px #737582;">Internal Reference</div>
<div class="a t" style="left:1219.55px;top:611.60px;font-size:13px;line-height:13px;font-weight:normal;font-style:normal;color:#999ba4;transform:scaleX(0.9532);transform-origin:0 0;font-family:'Liberation Sans',sans-serif;">FURN_6666</div>
<div class="a t" style="left:1077.99px;top:655.60px;font-size:13px;line-height:13px;font-weight:normal;font-style:normal;color:#737582;transform:scaleX(1.0066);transform-origin:0 0;font-family:'Liberation Sans',sans-serif;-webkit-text-stroke:0.35px #737582;">Barcode</div>
<div class="a t" style="left:1077.41px;top:700.50px;font-size:13px;line-height:13px;font-weight:normal;font-style:normal;color:#737582;transform:scaleX(0.9863);transform-origin:0 0;font-family:'Liberation Sans',sans-serif;-webkit-text-stroke:0.35px #737582;">HSN/SAC Code</div>
<div class="a t" style="left:1077.40px;top:747.00px;font-size:13px;line-height:13px;font-weight:normal;font-style:normal;color:#737582;transform:scaleX(1.0018);transform-origin:0 0;font-family:'Liberation Sans',sans-serif;-webkit-text-stroke:0.35px #737582;">HSN/SAC</div>
<div class="a t" style="left:1077.36px;top:767.00px;font-size:13px;line-height:13px;font-weight:normal;font-style:normal;color:#737582;transform:scaleX(1.0424);transform-origin:0 0;font-family:'Liberation Sans',sans-serif;-webkit-text-stroke:0.35px #737582;">Description</div>
<div class="a t" style="left:525.70px;top:896.77px;font-size:11.5px;line-height:11.5px;font-weight:bold;font-style:normal;color:#2b2f3b;transform:scaleX(0.9386);transform-origin:0 0;font-family:'Liberation Sans',sans-serif;">Internal Notes</div>
<div class="a t" style="left:524.68px;top:938.00px;font-size:13px;line-height:13px;font-weight:normal;font-style:normal;color:#d0d1d6;transform:scaleX(1.0189);transform-origin:0 0;font-family:'Liberation Sans',sans-serif;">Description</div>
</body></html>
